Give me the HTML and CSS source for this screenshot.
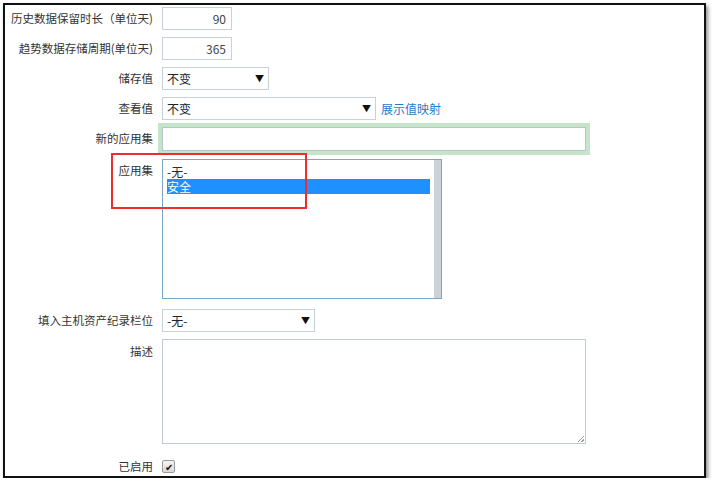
FILE: index.html
```html
<!DOCTYPE html>
<html lang="zh-CN">

<head>
    <meta charset="UTF-8">
    <title>应用集</title>
    <link rel="stylesheet" href="styles.css">
</head>

<body>
    <div class="frame">
        <div class="form">
            <div class="label">历史数据保留时长（单位天)</div>
            <div class="field"><div class="input num w70">90</div></div>

            <div class="label">趋势数据存储周期(单位天)</div>
            <div class="field"><div class="input num w70">365</div></div>

            <div class="label">储存值</div>
            <div class="field"><div class="select w106"><span>不变</span><span class="arrow">▼</span></div></div>

            <div class="label">查看值</div>
            <div class="field">
                <div class="select w213"><span>不变</span><span class="arrow">▼</span></div>
                <a class="link" href="#">展示值映射</a>
            </div>

            <div class="label">新的应用集</div>
            <div class="field"><div class="input focus w424"></div></div>

            <div class="label top">应用集</div>
            <div class="field">
                <div class="listbox">
                    <div class="options">
                        <div class="opt">-无-</div>
                        <div class="opt sel">安全</div>
                    </div>
                    <div class="scroll"></div>
                </div>
            </div>

            <div class="label gap">填入主机资产纪录栏位</div>
            <div class="field gap"><div class="select w152"><span>-无-</span><span class="arrow">▼</span></div></div>

            <div class="label top">描述</div>
            <div class="field"><div class="textarea"><span class="grip"></span></div></div>

            <div class="label last">已启用</div>
            <div class="field last"><span class="check">✔</span></div>
        </div>

        <!-- highlight box -->
        <div class="mark"></div>
    </div>
</body>

</html>
```

FILE: styles.css
```css
body {
    margin: 0;
    background: #fff;
    font-family: "Noto Sans CJK SC", "Liberation Sans", sans-serif;
    font-size: 12px;
    color: #2b2b2b;
}

.frame {
    position: relative;
    margin: 3px 0 0 3px;
    width: 699px;
    height: 471px;
    border: 2px solid #111;
    box-shadow: 2px 3px 4px rgba(0, 0, 0, 0.45);
    background: #fff;
    overflow: hidden;
}

.form {
    display: grid;
    grid-template-columns: 148px 1fr;
    column-gap: 9px;
    row-gap: 7px;
    padding-top: 2px;
}

.label {
    text-align: right;
    line-height: 23px;
    white-space: nowrap;
    height: 23px;
    font-size: 11.5px;
    color: #333;
}

.label.top {
    line-height: 18px;
    padding-top: 3px;
}

.field {
    display: flex;
    align-items: center;
    min-height: 23px;
}

.gap {
    margin-top: 3px;
}

.last {
    margin-top: 4px;
}

.input,
.select {
    box-sizing: border-box;
    height: 23px;
    border: 1px solid #c9d1d6;
    background: #fff;
    line-height: 21px;
    padding: 0 5px;
}

.num {
    text-align: right;
    color: #444;
}

.w70 { width: 70px; }
.w106 { width: 107px; }
.w213 { width: 214px; }
.w152 { width: 153px; }
.w424 { width: 424px; }

.focus {
    height: 24px;
    border-color: #b5c4ce;
    box-shadow: 0 0 0 4px #c6e5c8;
}

.select {
    display: flex;
    justify-content: space-between;
    padding: 0 4px;
    color: #222;
}

.arrow {
    font-size: 9px;
    color: #111;
}

.link {
    color: #1e7ec8;
    text-decoration: none;
    margin-left: 5px;
}

.listbox {
    box-sizing: border-box;
    width: 280px;
    height: 140px;
    margin-top: 1px;
    border: 1px solid #7ba6c6;
    display: flex;
}

.options {
    flex: 1;
    padding: 4px 4px 0 4px;
}

.opt {
    line-height: 15px;
    height: 15px;
    overflow: hidden;
}

.opt.sel {
    background: #1e90ff;
    color: #fff;
}

.scroll {
    width: 7px;
    background: #ccd3d8;
}

.textarea {
    position: relative;
    box-sizing: border-box;
    width: 424px;
    height: 105px;
    border: 1px solid #bfcbd5;
}

.grip {
    position: absolute;
    right: 1px;
    bottom: 1px;
    width: 6px;
    height: 6px;
    background: linear-gradient(135deg, transparent 45%, #999 45%, #999 55%, transparent 55%, transparent 75%, #999 75%, #999 85%, transparent 85%);
}

.check {
    box-sizing: border-box;
    width: 13px;
    height: 13px;
    border: 1px solid #9a9a9a;
    border-radius: 2px;
    background: linear-gradient(#f4f4f4, #d8d8d8);
    font-size: 10px;
    line-height: 11px;
    text-align: center;
    color: #111;
}

.mark {
    position: absolute;
    left: 106px;
    top: 148px;
    width: 196px;
    height: 56px;
    box-sizing: border-box;
    border: 2px solid #e8302f;
}
```
